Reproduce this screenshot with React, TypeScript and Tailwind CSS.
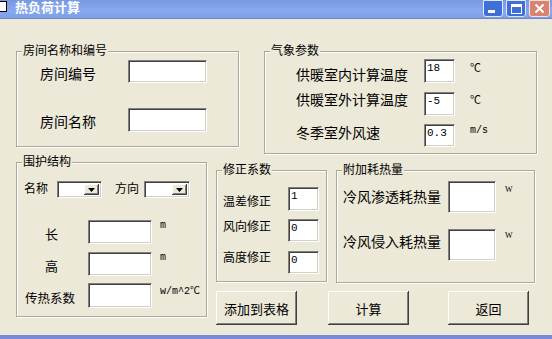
import React from "react";

const sunken =
  "bg-white border border-t-[#808080] border-l-[#808080] border-r-white border-b-white shadow-[inset_1px_1px_0_#404040,inset_-1px_-1px_0_#d4d0c8]";
const raised =
  "bg-[#ece9d8] shadow-[inset_-1px_-1px_0_#404040,inset_1px_1px_0_#ffffff,inset_-2px_-2px_0_#808080]";

function Group({
  title,
  className,
  children,
}: {
  title: string;
  className: string;
  children?: React.ReactNode;
}) {
  return (
    <div
      className={
        "relative box-border border border-[#aca899] shadow-[inset_1px_1px_0_#fff,1px_1px_0_#fff] " +
        className
      }
    >
      <div className="absolute left-[5px] top-[-9px] bg-[#ece9d8] px-[1px] text-[12px] leading-[14px] text-black whitespace-nowrap">
        {title}
      </div>
      {children}
    </div>
  );
}

function Input({ w, h, value }: { w: string; h: string; value?: string }) {
  return (
    <div className={`${w} ${h} box-border shrink-0 ${sunken} pl-[2px] pt-[3px]`}>
      {value && (
        <div className="font-[family-name:Liberation_Mono,monospace] text-[11px] leading-[11px] text-black">
          {value}
        </div>
      )}
    </div>
  );
}

function Combo({ w }: { w: string }) {
  return (
    <div className={`${w} h-[17px] box-border shrink-0 ${sunken} flex justify-end p-[2px]`}>
      <div className={`w-[15px] h-full ${raised} flex items-center justify-center`}>
        <svg width="7" height="4" viewBox="0 0 7 4">
          <path d="M0 0h7L3.5 4z" fill="#000" />
        </svg>
      </div>
    </div>
  );
}

function Button({ label, className = "" }: { label: string; className?: string }) {
  return (
    <div
      className={`w-[81px] h-[34px] shrink-0 ${raised} flex items-center justify-center text-[13px] leading-[13px] text-black ${className}`}
    >
      {label}
    </div>
  );
}

export default function App() {
  return (
    <div className="w-[552px] h-[339px] overflow-hidden flex flex-col bg-[#ece9d8] font-[family-name:Noto_Sans_CJK_SC,sans-serif] text-black">
      {/* Title bar */}
      <div className="h-[19px] shrink-0 flex items-start bg-[linear-gradient(to_bottom,#7898e0,#88a8ef_60%,#7e9de5)] border-b border-[#6a86d0]">
        <div className="w-[7px] h-[11px] mt-[1px] bg-white border border-black border-l-0" />
        <div className="ml-[8px] mt-0 text-[13px] leading-[13px] font-bold text-white">
          热负荷计算
        </div>
        <div className="ml-auto flex gap-[3px] mr-[2px]">
          <div className="w-[20px] h-[17px] rounded-b-[3px] bg-[#3f6fd9] border border-[#dfe8fb] flex items-end pl-[4px] pb-[3px]">
            <div className="w-[7px] h-[3px] bg-white" />
          </div>
          <div className="w-[20px] h-[17px] rounded-b-[3px] bg-[#3f6fd9] border border-[#dfe8fb] flex items-center justify-center">
            <div className="w-[11px] h-[10px] border border-white border-t-[3px]" />
          </div>
          <div className="w-[21px] h-[17px] rounded-b-[3px] bg-[#d9836e] border border-[#f3e1dc] flex items-center justify-center">
            <svg width="11" height="11" viewBox="0 0 11 11">
              <path d="M1.5 1.5l8 8M9.5 1.5l-8 8" stroke="#fff" strokeWidth="2" />
            </svg>
          </div>
        </div>
      </div>

      {/* Body */}
      <div className="flex-1 flex flex-col pl-[16px] pt-[32px]">
        {/* Row 1 */}
        <div className="flex items-start">
          <Group title="房间名称和编号" className="w-[223px] h-[96px] pt-[8px]">
            <div className="flex h-[23px]">
              <div className="ml-[23px] w-[88px] mt-[6px] text-[14px] leading-[14px]">房间编号</div>
              <Input w="w-[79px]" h="h-[23px]" />
            </div>
            <div className="flex h-[24px] mt-[25px]">
              <div className="ml-[23px] w-[88px] mt-[6px] text-[14px] leading-[14px]">房间名称</div>
              <Input w="w-[79px]" h="h-[24px]" />
            </div>
          </Group>

          <Group title="气象参数" className="ml-[25px] w-[273px] h-[103px] pt-[7px]">
            <div className="flex h-[24px]">
              <div className="ml-[31px] w-[128px] mt-[8px] text-[14px] leading-[14px]">供暖室内计算温度</div>
              <Input w="w-[31px]" h="h-[24px]" value="18" />
              <div className="ml-[15px] mt-[3px] text-[11px] leading-[11px]">℃</div>
            </div>
            <div className="flex h-[24px] mt-[9px]">
              <div className="ml-[31px] w-[128px] mt-[0px] text-[14px] leading-[14px]">供暖室外计算温度</div>
              <Input w="w-[31px]" h="h-[24px]" value="-5" />
              <div className="ml-[15px] mt-[2px] text-[11px] leading-[11px]">℃</div>
            </div>
            <div className="flex h-[23px] mt-[8px]">
              <div className="ml-[31px] w-[128px] mt-[1px] text-[14px] leading-[14px]">冬季室外风速</div>
              <Input w="w-[31px]" h="h-[23px]" value="0.3" />
              <div className="ml-[15px] mt-[2px] font-[family-name:Liberation_Mono,monospace] text-[10px] leading-[10px] text-black">
                m/s
              </div>
            </div>
          </Group>
        </div>

        {/* Row 2 */}
        <div className="flex items-start mt-[8px]">
          <Group title="围护结构" className="w-[191px] h-[155px] pt-[18px]">
            <div className="flex h-[17px]">
              <div className="ml-[7px] w-[33px] mt-[1px] text-[12px] leading-[12px]">名称</div>
              <Combo w="w-[45px]" />
              <div className="ml-[13px] w-[29px] mt-[1px] text-[12px] leading-[12px]">方向</div>
              <Combo w="w-[46px]" />
            </div>
            <div className="flex h-[24px] mt-[22px]">
              <div className="ml-[28px] w-[43px] mt-[7px] text-[13px] leading-[13px]">长</div>
              <Input w="w-[64px]" h="h-[24px]" />
              <div className="ml-[8px] mt-[1px] font-[family-name:Liberation_Mono,monospace] text-[10px] leading-[10px] text-black">m</div>
            </div>
            <div className="flex h-[24px] mt-[8px]">
              <div className="ml-[28px] w-[43px] mt-[7px] text-[13px] leading-[13px]">高</div>
              <Input w="w-[64px]" h="h-[24px]" />
              <div className="ml-[8px] mt-[1px] font-[family-name:Liberation_Mono,monospace] text-[10px] leading-[10px] text-black">m</div>
            </div>
            <div className="flex h-[25px] mt-[7px]">
              <div className="ml-[8px] w-[63px] mt-[8px] text-[12.5px] leading-[13px] whitespace-nowrap">传热系数</div>
              <Input w="w-[64px]" h="h-[25px]" />
              <div className="ml-[8px] mt-[2px] text-[10px] leading-[10px] whitespace-nowrap">
                <span className="font-[family-name:Liberation_Mono,monospace]">w/m^2</span>℃
              </div>
            </div>
          </Group>

          <div className="ml-[9px] mt-[8px] flex flex-col">
            <div className="flex items-start">
              <Group title="修正系数" className="w-[111px] h-[112px] pt-[16px]">
                <div className="flex h-[24px]">
                  <div className="ml-[6px] w-[65px] mt-[8px] text-[12px] leading-[12px]">温差修正</div>
                  <Input w="w-[31px]" h="h-[24px]" value="1" />
                </div>
                <div className="flex h-[23px] mt-[8px]">
                  <div className="ml-[6px] w-[65px] mt-[1px] text-[12px] leading-[12px]">风向修正</div>
                  <Input w="w-[31px]" h="h-[23px]" value="0" />
                </div>
                <div className="flex h-[23px] mt-[9px]">
                  <div className="ml-[6px] w-[65px] mt-[0px] text-[12px] leading-[12px]">高度修正</div>
                  <Input w="w-[31px]" h="h-[23px]" value="0" />
                </div>
              </Group>

              <Group title="附加耗热量" className="ml-[9px] w-[199px] h-[113px] pt-[10px]">
                <div className="flex h-[32px]">
                  <div className="ml-[6px] w-[105px] mt-[8px] text-[14px] leading-[14px] whitespace-nowrap">冷风渗透耗热量</div>
                  <Input w="w-[48px]" h="h-[32px]" />
                  <div className="ml-[9px] mt-[5px] font-[family-name:Liberation_Serif,serif] text-[8px] leading-[8px]">W</div>
                </div>
                <div className="flex h-[32px] mt-[16px]">
                  <div className="ml-[6px] w-[105px] mt-[5px] text-[14px] leading-[14px] whitespace-nowrap">冷风侵入耗热量</div>
                  <Input w="w-[48px]" h="h-[32px]" />
                  <div className="ml-[9px] mt-[3px] font-[family-name:Liberation_Serif,serif] text-[8px] leading-[8px]">W</div>
                </div>
              </Group>
            </div>

            <div className="flex mt-[8px]">
              <Button label="添加到表格" />
              <Button label="计算" className="ml-[31px]" />
              <Button label="返回" className="ml-[39px]" />
            </div>
          </div>
        </div>
      </div>

      {/* Bottom border */}
      <div className="h-[4px] shrink-0 bg-[#7a89d8]" />
    </div>
  );
}
